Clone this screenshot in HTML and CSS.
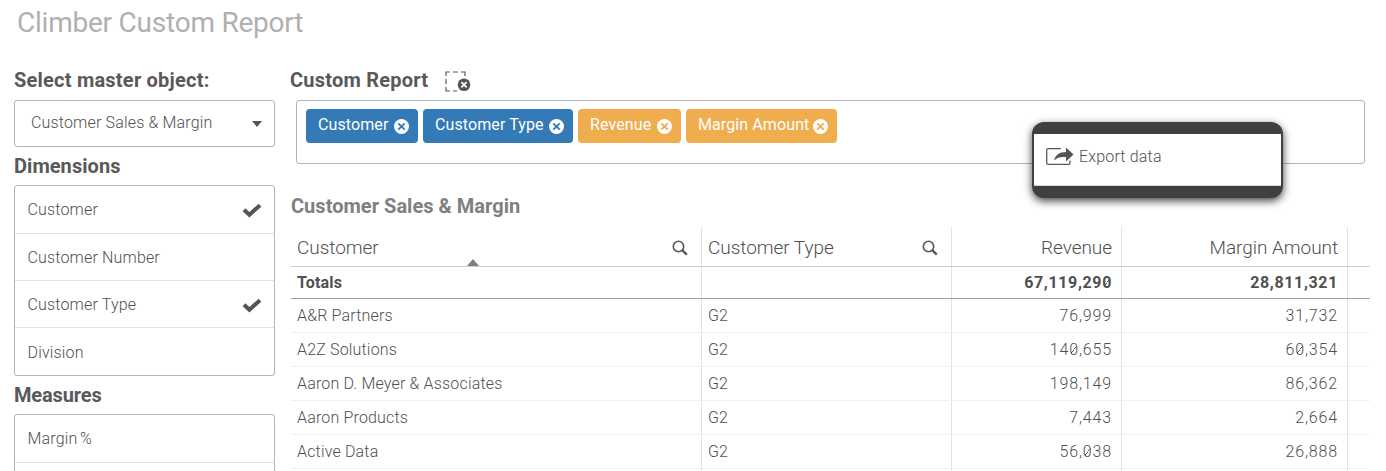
FILE: index.html
```html
<!DOCTYPE html>
<html lang="en">
<head>
<meta charset="utf-8">
<title>Climber Custom Report</title>
<link rel="stylesheet" href="styles.css">
</head>
<body>
<svg class="defs" width="0" height="0">
  <symbol id="check" viewBox="0 0 20 15"><path d="M2 6.8 7.400 11.800 18 2.200" fill="none" stroke="#555" stroke-width="4"/></symbol>
  <symbol id="search" viewBox="0 0 16 16"><circle cx="6.5" cy="6.5" r="5.2" fill="none" stroke="#595959" stroke-width="1.6"/><path d="m10.2 10.2 4.6 4.4" stroke="#595959" stroke-width="2.5"/></symbol>
  <symbol id="remove" viewBox="0 0 14 14"><circle cx="7" cy="7" r="7" fill="#fff"/><path d="m4 4 6 6m0-6-6 6" stroke="currentColor" stroke-width="1.700"/></symbol>
</svg>
<h1 class="title">Climber Custom Report</h1>
<div class="layout">
  <aside class="side">
    <h2 class="heading"><span class="wide">Select master object:</span></h2>
    <div class="select"><span>Customer Sales &amp; Margin</span><i class="caret"></i></div>
    <h2 class="heading sub"><span>Dimensions</span></h2>
    <ul class="list">
      <li><span>Customer</span><svg class="check"><use href="#check"/></svg></li>
      <li><span>Customer Number</span></li>
      <li><span>Customer Type</span><svg class="check"><use href="#check"/></svg></li>
      <li><span>Division</span></li>
    </ul>
    <h2 class="heading sub"><span class="tight">Measures</span></h2>
    <ul class="list">
      <li><span class="percent">Margin %</span></li>
      <li></li>
    </ul>
  </aside>
  <main class="main">
    <h2 class="heading"><span class="wide">Custom Report</span>
      <svg class="clear" viewBox="0 0 26 21"><path d="M1 5V1h4M8 1h5M16 1h4v4M1 8v5M1 16v4h4M8 20h4M20 8v1" fill="none" stroke="#595959" stroke-width="1.2"/><circle cx="19" cy="13.7" r="6.3" fill="#555"/><path d="m16.4 11.1 5.2 5.2m0-5.2-5.2 5.2" stroke="#fff" stroke-width="1.7"/></svg>
    </h2>
    <div class="fields">
      <span class="chip dim c1"><b>Customer</b><svg><use href="#remove"/></svg></span>
      <span class="chip dim c2"><b>Customer Type</b><svg><use href="#remove"/></svg></span>
      <span class="chip mea c3"><b>Revenue</b><svg><use href="#remove"/></svg></span>
      <span class="chip mea c4"><b>Margin Amount</b><svg><use href="#remove"/></svg></span>
      <div class="menu"><div class="item">
        <svg class="export" viewBox="0 0 28 19"><path d="M15 1.6H2.2Q.7 1.6.7 3v13Q.7 17.4 2.2 17.4h20.600Q24 17.400 24 16v-2.500" fill="none" stroke="#595959" stroke-width="1.300"/><path d="M8 13.500C9.500 8 13 5 20 5V.5l7.500 7-7.500 7V10c-5-.5-9 .5-12 3.500z" fill="#555"/></svg>
        <span>Export data</span></div></div>
    </div>
    <h3 class="caption"><span>Customer Sales &amp; Margin</span></h3>
    <div class="table">
      <div class="row head"><div>Customer<svg class="find"><use href="#search"/></svg><i class="sort"></i></div><div>Customer Type<svg class="find"><use href="#search"/></svg></div><div class="num">Revenue</div><div class="num">Margin Amount</div><div></div></div>
      <div class="row totals"><div>Totals</div><div></div><div class="num">67,119,29<span class="zero">0</span></div><div class="num">28,811,321</div><div></div></div>
      <div class="row"><div>A&amp;R Partners</div><div>G2</div><div class="num">76,999</div><div class="num">31,732</div><div></div></div>
      <div class="row"><div>A2Z Solutions</div><div>G2</div><div class="num">14<span class="zero">0</span>,655</div><div class="num">6<span class="zero">0</span>,354</div><div></div></div>
      <div class="row"><div>Aaron D. Meyer &amp; Associates</div><div>G2</div><div class="num">198,149</div><div class="num">86,362</div><div></div></div>
      <div class="row"><div>Aaron Products</div><div>G2</div><div class="num">7,443</div><div class="num">2,664</div><div></div></div>
      <div class="row"><div>Active Data</div><div>G2</div><div class="num">56,<span class="zero">0</span>38</div><div class="num">26,888</div><div></div></div>
      <div class="row"><div></div><div></div><div></div><div></div><div></div></div>
    </div>
  </main>
</div>
</body>
</html>
```
FILE: styles.css
```css
* { box-sizing: border-box; }
body {
  margin: 0;
  height: 471px;
  overflow: hidden;
  background: #fff;
  color: #505050;
  font: 350 16px/20px Roboto, "Liberation Sans", sans-serif;
  letter-spacing: .17px;
  white-space: nowrap;
}
.defs { display: block; height: 0; }
h1, h2, h3, ul { margin: 0; padding: 0; list-style: none; }
.title {
  height: 66px;
  padding: 6px 0 0 17px;
  color: #b0b0b0;
  font-size: 28px;
  line-height: 34px;
  font-weight: 400;
  letter-spacing: -.23px;
}
.layout { display: flex; gap: 15px; height: 405px; padding-left: 14px; overflow: hidden; }
.side { width: 261px; }
.main { width: 1080px; }
.heading {
  display: flex;
  align-items: center;
  gap: 16px;
  height: 34px;
  padding-bottom: 6px;
  font-size: 20px;
  font-weight: 700;
  letter-spacing: .05px;
  color: #595959;
}
.heading .wide { letter-spacing: .22px; }
.heading .tight { letter-spacing: -.15px; }
.heading.sub { height: 38px; padding: 0; }
.select {
  display: flex;
  align-items: center;
  justify-content: space-between;
  height: 47px;
  padding: 0 12px 2px 16px;
  border: 1px solid #b3b3b3;
  border-radius: 3px;
}
.caret { border: 5px solid transparent; border-top: 6px solid #555; border-bottom: 0; margin-top: 3px; }
.list { border: 1px solid #b3b3b3; border-radius: 3px; }
.list li {
  display: flex;
  align-items: center;
  justify-content: space-between;
  height: 47.25px;
  padding: 2px 12px 0 12.5px;
  border-bottom: 1px solid #e2e2e2;
}
.list li:first-child { height: 48px; padding-top: 1px; }
.list li:nth-child(n + 2) { height: 47px; }
.list li:last-child { border-bottom: 0; }
.percent { word-spacing: -1.5px; }
.check { width: 20px; height: 15px; }
.clear { width: 26px; height: 21px; margin: 2px 0 0 1px; }
.fields {
  position: relative;
  display: flex;
  align-items: flex-start;
  gap: 5px;
  width: 1069px;
  height: 64px;
  margin-left: 6px;
  padding: 8px 9px;
  border: 1px solid #b3b3b3;
  border-radius: 3px;
}
.chip {
  display: flex;
  align-items: center;
  justify-content: space-between;
  height: 34px;
  padding: 0 9px 2px 12px;
  border-radius: 4px;
}
.chip b { font-weight: 400; color: #fff; letter-spacing: .1px; }
.chip svg { width: 15px; height: 15px; margin-top: 2px; }
.dim { background: #337ab7; color: #337ab7; }
.mea { background: #f0ad4e; color: #f0ad4e; }
.c1 { width: 112px; }
.c2 { width: 150px; }
.c3 { width: 103px; }
.c4 { width: 151px; }
.menu {
  position: absolute;
  left: 735px;
  top: 21px;
  width: 251px;
  height: 76px;
  padding: 12px 2px;
  border-radius: 12px;
  background: #404040;
  box-shadow: 0 3px 9px rgba(0, 0, 0, .75);
}
.item {
  display: flex;
  align-items: center;
  gap: 5px;
  height: 52px;
  padding: 0 12px 6px;
  background: #fff;
  border-bottom: 1px solid #d9d9d9;
}
.export { width: 28px; height: 19px; }
.caption {
  padding: 32px 0 0 1px;
  height: 63px;
  color: #808080;
  font-size: 20px;
  font-weight: 700;
  letter-spacing: .03px;
}
.table { margin-left: 1px; width: 1079px; }
.row {
  display: grid;
  grid-template-columns: 411px 250px 170px 226px 22px;
  height: 34px;
  border-bottom: 1px solid #f0f0f0;
}
.row > div {
  position: relative;
  display: flex;
  align-items: center;
  justify-content: space-between;
  padding: 0 9px 0 6px;
  border-right: 1px solid #e2e2e2;
}
.row > div:last-child { border-right: 0; }
.row > .num { justify-content: flex-end; letter-spacing: .85px; }
.zero { background: linear-gradient(125deg, transparent 47%, currentColor 48%, currentColor 54%, transparent 55%) 1px 6px / 7px 8px no-repeat; }
.row.head { height: 40px; font-size: 19px; border-bottom-color: #ccc; letter-spacing: -.05px; }
.row.head > div { padding-top: 2px; }
.row.head > .num { letter-spacing: -.05px; }
.row.totals { height: 32px; font-weight: 700; border-bottom-color: #a0a0a0; }
.row.totals > .num { letter-spacing: .65px; }
.find { width: 16px; height: 16px; margin: 1px 4px 0 0; }
.sort {
  position: absolute;
  left: 176px;
  bottom: 0;
  border: 6px solid transparent;
  border-top: 0;
  border-bottom: 7px solid #808080;
}
```
